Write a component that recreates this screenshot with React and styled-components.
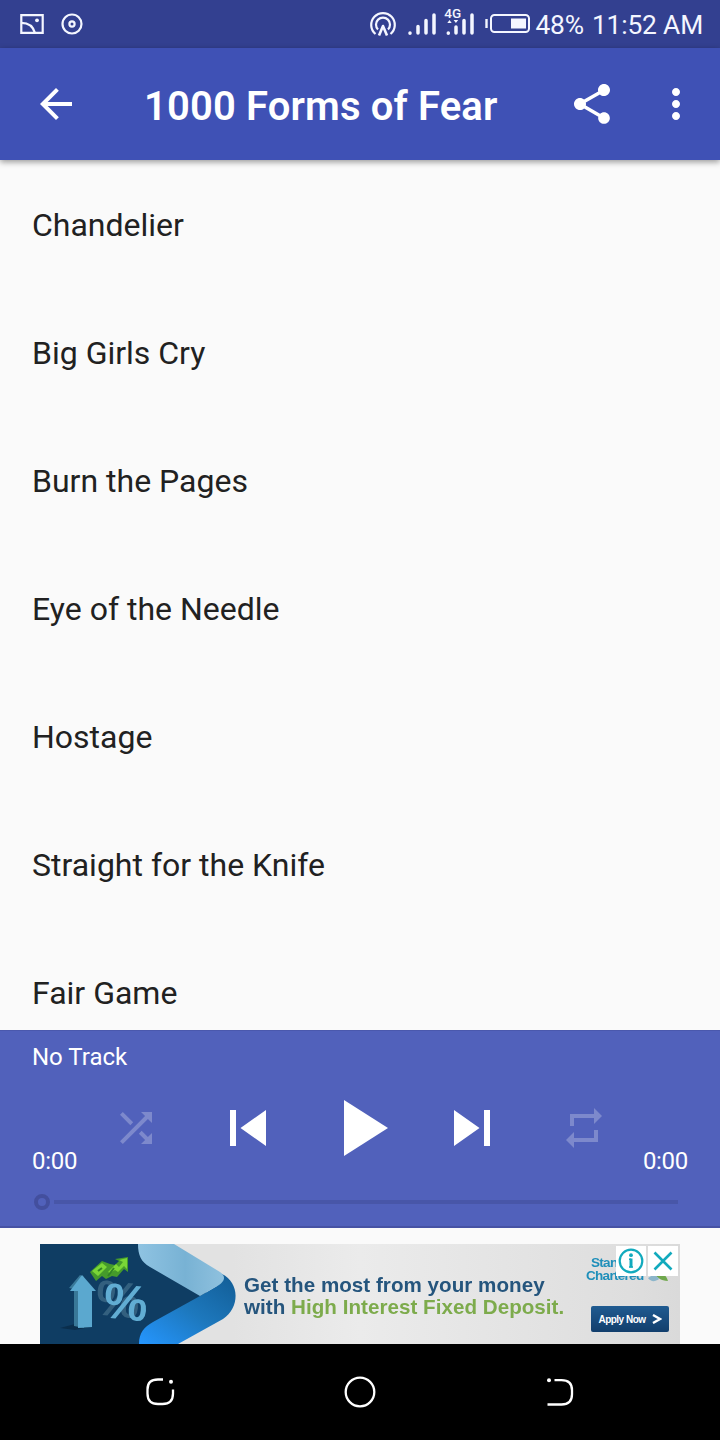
import React from "react";
import styled, { createGlobalStyle } from "styled-components";

const tracks = [
  "Chandelier",
  "Big Girls Cry",
  "Burn the Pages",
  "Eye of the Needle",
  "Hostage",
  "Straight for the Knife",
  "Fair Game",
];

const paths = {
  back: "M20 11H7.83l5.59-5.59L12 4l-8 8 8 8 1.41-1.41L7.83 13H20v-2z",
  share:
    "M18 16.08c-.76 0-1.44.3-1.96.77L8.91 12.7c.05-.23.09-.46.09-.7s-.04-.47-.09-.7l7.05-4.11c.54.5 1.25.81 2.04.81 1.66 0 3-1.34 3-3s-1.34-3-3-3-3 1.34-3 3c0 .24.04.47.09.7L8.04 9.81C7.5 9.31 6.79 9 6 9c-1.66 0-3 1.34-3 3s1.34 3 3 3c.79 0 1.5-.31 2.04-.81l7.12 4.16c-.05.21-.08.43-.08.65 0 1.61 1.31 2.92 2.92 2.92s2.92-1.31 2.92-2.92-1.31-2.92-2.92-2.92z",
  more:
    "M12 8c1.1 0 2-.9 2-2s-.9-2-2-2-2 .9-2 2 .9 2 2 2zm0 2c-1.1 0-2 .9-2 2s.9 2 2 2 2-.9 2-2-.9-2-2-2zm0 6c-1.1 0-2 .9-2 2s.9 2 2 2 2-.9 2-2-.9-2-2-2z",
  shuffle:
    "M10.59 9.17L5.41 4 4 5.41l5.17 5.17 1.42-1.41zM14.5 4l2.04 2.04L4 18.59 5.41 20 17.96 7.46 20 9.5V4h-5.5zm.33 9.41l-1.41 1.41 3.13 3.13L14.5 20H20v-5.5l-2.04 2.04-3.13-3.13z",
  previous: "M6 6h2v12H6zm3.5 6l8.5 6V6z",
  play: "M8 5v14l11-7z",
  next: "M6 18l8.5-6L6 6v12zM16 6v12h2V6h-2z",
  repeat: "M7 7h10v3l4-4-4-4v3H5v6h2V7zm10 10H7v-3l-4 4 4 4v-3h12v-6h-2v4z",
};

const Icon = ({ name, size = 48 }) => (
  <svg width={size} height={size} viewBox="0 0 24 24" fill="currentColor">
    <path d={paths[name]} />
  </svg>
);

const StatusIcons = () => (
  <StatusGroup>
    <svg width="24" height="20" viewBox="0 0 24 20" fill="none" stroke="#f4f6ff" strokeWidth="2.2">
      <path d="M1.3 1.1h21.4v17.8H1.3z" />
      <path d="M1.3 8.8c8 0 12 4 13.7 10.2" />
      <circle cx="17" cy="6.3" r="1.9" fill="#f4f6ff" stroke="none" />
    </svg>
    <svg width="22" height="22" viewBox="0 0 22 22" fill="none" stroke="#f4f6ff" strokeWidth="2.2">
      <circle cx="11" cy="11" r="9.5" />
      <circle cx="11" cy="11" r="2.6" />
    </svg>
  </StatusGroup>
);

const Connectivity = () => (
  <svg width="164" height="48" viewBox="368 0 164 48" fill="none" stroke="#f4f6ff" strokeWidth="2.2">
    <path d="M375.5 34a11.8 11.8 0 1 1 15 0" />
    <path d="M378 29.5a7 7 0 1 1 10 0" />
    <path d="M379 35.5l4-9.5 4 9.5" strokeWidth="2.6" strokeLinejoin="round" />
    <g strokeWidth="3.5" strokeLinecap="round">
      <path d="M410 33v.2M418 26.5v6.5M426 20.5v12.5M434 15v18" />
      <path d="M448.3 33v.2M456 27v6M464 20.5v12.5M472 15v18" />
    </g>
    <path d="M447.3 23l2.2-3 2.2 3zM453.6 20h4.6l-2.3 3z" fill="#f4f6ff" stroke="none" />
    <text x="444.3" y="17.8" fill="#f4f6ff" stroke="none" fontSize="13.5" fontWeight="500">4G</text>
    <path d="M486.5 19v9" strokeWidth="2.4" />
    <rect x="491" y="15" width="38" height="17" rx="3.5" strokeWidth="2" />
    <path d="M511 18.5h15v10h-15z" fill="#f4f6ff" stroke="none" />
  </svg>
);

const AdArtwork = () => (
  <svg width="200" height="100" viewBox="0 0 200 100">
    <defs>
      <linearGradient id="upper" x1="0" x2="1">
        <stop offset="0" stopColor="#8fc3e2" />
        <stop offset=".55" stopColor="#78b2d4" />
        <stop offset="1" stopColor="#8fc1de" />
      </linearGradient>
      <linearGradient id="lower" x1="0" y1="1" x2="1" y2="0">
        <stop offset="0" stopColor="#2596ff" />
        <stop offset=".5" stopColor="#1d78bd" />
        <stop offset="1" stopColor="#125c94" />
      </linearGradient>
    </defs>
    <path d="M0 0h110l60 52-60 48H0z" fill="#0f3d63" />
    <path d="M182 30c18 9 18 34 1 45l-45 25H99c0-11 5-17 14-22l47-26 17-10z" fill="url(#lower)" />
    <path d="M98 0h36l46 28c6 4 5 9-1 13l-19 11-50-29C101 18 98 11 98 0z" fill="url(#upper)" />
    <path d="M20 84l15-4 15 3-15 3z" fill="#0a2e4c" />
    <path d="M29 44L40 31l4 2v51l-10-2V45z" fill="#397898" />
    <path d="M42 31l14 16h-4v36l-14 1V47h-8z" fill="#5ba8cf" />
    <g fontFamily="Liberation Sans" fontSize="50" fontWeight="700">
      <text x="54" y="70" fill="#33607f" transform="rotate(6 54 70)">%</text>
      <text x="62" y="73" fill="#61add3" transform="rotate(6 62 73)">%</text>
    </g>
    <path d="M50 28l12-11 8 3 5 1 4-4-4-2 13-2v15l-4-3-7 8-5-1-6 3-4-3-6 5z" fill="#459b2b" />
    <path d="M52 27l10-8 5 4-9 9zM68 28l8-8 3 3 4-5-4-2 8-2v11l-3-3-6 6-3-2-5 3z" fill="#7ad637" />
    <path d="M58 27l4-3M68 32l6-8" stroke="#328525" strokeWidth="2" />
  </svg>
);

const App = () => {
  return (
    <Screen>
      <GlobalStyle />
      <StatusBar>
        <StatusIcons />
        <StatusGroup>
          <Connectivity />
          <StatusText>48%</StatusText>
          <StatusText>11:52 AM</StatusText>
        </StatusGroup>
      </StatusBar>
      <AppBar>
        <IconButton aria-label="Back"><Icon name="back" /></IconButton>
        <Title>1000 Forms of Fear</Title>
        <IconButton aria-label="Share"><Icon name="share" /></IconButton>
        <IconButton aria-label="More"><Icon name="more" /></IconButton>
      </AppBar>
      <TrackList>
        {tracks.map((track) => (
          <Track key={track}>{track}</Track>
        ))}
      </TrackList>
      <Player>
        <NowPlaying>No Track</NowPlaying>
        <Controls>
          <IconButton dim><Icon name="shuffle" /></IconButton>
          <IconButton><Icon name="previous" size={72} /></IconButton>
          <IconButton><Icon name="play" size={96} /></IconButton>
          <IconButton><Icon name="next" size={72} /></IconButton>
          <IconButton dim><Icon name="repeat" /></IconButton>
        </Controls>
        <Times>
          <span>0:00</span>
          <span>0:00</span>
        </Times>
        <SeekBar>
          <Thumb />
          <Rail />
        </SeekBar>
      </Player>
      <AdSlot>
        <Ad>
          <AdContent>
            <AdArtwork />
            <AdCopy>
              <AdLine>Get the most from your money</AdLine>
              <AdLine>with <em>High Interest Fixed Deposit.</em></AdLine>
            </AdCopy>
            <AdBrand>
              <BrandName>
                <span>Standard</span>
                <span>Chartered</span>
                <svg width="24" height="16" viewBox="0 0 24 16">
                  <path d="M6 2c9-1 15 3 17 10-7 0-12-4-17-10z" fill="#70a84d" />
                  <path d="M3 9c5-4 9-3 11 1-4 3-8 3-11-1z" fill="#8cb6cb" />
                </svg>
              </BrandName>
              <ApplyButton>
                Apply Now
                <svg width="10" height="10" viewBox="0 0 10 10" fill="none" stroke="#fff" strokeWidth="2.4">
                  <path d="M1 1l7 4-7 4" />
                </svg>
              </ApplyButton>
            </AdBrand>
          </AdContent>
          <AdChoices>
            <AdChoice>
              <svg width="26" height="26" viewBox="0 0 26 26" fill="none" stroke="#12aabd" strokeWidth="2.2">
                <circle cx="13" cy="13" r="11.3" />
                <path d="M13 10.5v9" strokeWidth="3" />
                <path d="M11 11.3h2M11 19h4" strokeWidth="1.6" />
                <circle cx="13" cy="7.2" r="1.9" fill="#12aabd" stroke="none" />
              </svg>
            </AdChoice>
            <AdChoice>
              <svg width="20" height="20" viewBox="0 0 20 20" stroke="#12aabd" strokeWidth="2.6">
                <path d="M1.5 1.5l17 17M18.5 1.5l-17 17" />
              </svg>
            </AdChoice>
          </AdChoices>
        </Ad>
      </AdSlot>
      <NavBar>
        <svg width="30" height="30" viewBox="0 0 30 30">
          <path d="M18 2.5h-5c-7 0-10.500 3-10.500 10v4c0 7 3.500 10.500 10.500 10.500h4.500c7 0 10.500-3.500 10.500-10.500v-4" />
          <circle cx="26" cy="4.8" r="2" />
        </svg>
        <svg width="32" height="32" viewBox="0 0 32 32">
          <circle cx="16" cy="16" r="14.3" fill="none" strokeWidth="2.3" stroke="#fff" />
        </svg>
        <svg width="30" height="30" viewBox="0 0 30 30">
          <path d="M9.5 3.2h7c7 0 10.5 3 10.5 10v4c0 7-3.5 10.3-10.5 10.3H2.5" />
          <circle cx="4" cy="3.3" r="2" />
        </svg>
      </NavBar>
    </Screen>
  );
};

export default App;

const GlobalStyle = createGlobalStyle`
  * {
    box-sizing: border-box;
  }

  body {
    margin: 0;
    font-family: Roboto, sans-serif;
  }

  svg {
    display: block;
    flex-shrink: 0;
  }
`;

const Screen = styled.div`
  display: flex;
  flex-direction: column;
  width: 720px;
  height: 1440px;
  overflow: hidden;
  background: #fafafa;
`;

const StatusBar = styled.div`
  display: flex;
  justify-content: space-between;
  height: 48px;
  padding: 0 17px 0 20px;
  flex-shrink: 0;
  background: #334090;
`;

const StatusGroup = styled.div`
  display: flex;
  align-items: center;
  gap: 17px;

  svg + span {
    margin-left: -14px;
  }

  span + span {
    margin-left: -9px;
  }
`;

const StatusText = styled.span`
  padding-top: 2px;
  color: #f4f6ff;
  font-size: 26.4px;
  line-height: 32px;
  letter-spacing: -0.18px;
  white-space: nowrap;
`;

const AppBar = styled.header`
  display: flex;
  align-items: center;
  gap: 36px;
  height: 112px;
  padding: 0 20px 0 32px;
  flex-shrink: 0;
  background: #3f51b5;
  color: #fff;
  box-shadow: 0 2px 6px rgba(0, 0, 0, 0.4);
  z-index: 1;
`;

const Title = styled.h1`
  flex: 1;
  margin: 0;
  padding: 6px 0 0 28px;
  font-size: 40px;
  font-weight: 560;
  line-height: 48px;
  letter-spacing: 0.14px;
  white-space: nowrap;
`;

const IconButton = styled.button.withConfig({
  shouldForwardProp: (prop) => prop !== "dim",
})`
  padding: 0;
  border: 0;
  background: none;
  color: #fff;
  opacity: ${({ dim }) => (dim ? 0.25 : 1)};
`;

const TrackList = styled.ul`
  height: 870px;
  margin: 0;
  padding: 0;
  flex-shrink: 0;
  overflow: hidden;
  list-style: none;
`;

const Track = styled.li`
  display: flex;
  align-items: center;
  height: 128px;
  padding: 2px 32px 0;
  color: #212121;
  font-size: 32px;
`;

const Player = styled.section`
  display: flex;
  flex-direction: column;
  height: 198px;
  padding-top: 12px;
  flex-shrink: 0;
  border-top: 1px solid #4a58ad;
  border-bottom: 2px solid #4652a4;
  background: #5161bb;
  color: #fff;
  font-size: 24px;
`;

const NowPlaying = styled.div`
  height: 37px;
  padding: 0 32px;
  line-height: 28px;
`;

const Controls = styled.div`
  display: grid;
  grid-template-columns: repeat(5, 112px);
  justify-content: center;
  align-items: center;
  justify-items: center;
  height: 96px;
`;

const Times = styled.div`
  display: flex;
  justify-content: space-between;
  margin-top: -29px;
  padding: 0 32px;
  line-height: 28px;
  letter-spacing: -0.3px;
`;

const SeekBar = styled.div`
  display: flex;
  align-items: center;
  gap: 4px;
  height: 16px;
  margin-top: 19px;
  padding: 0 42px 0 34px;
`;

const Thumb = styled.div`
  width: 16px;
  height: 16px;
  border: 4px solid #434f9e;
  border-radius: 50%;
`;

const Rail = styled.div`
  flex: 1;
  height: 4px;
  background: #4856a8;
`;

const AdSlot = styled.div`
  height: 116px;
  padding: 16px 40px 0;
  flex-shrink: 0;
`;

const Ad = styled.div`
  position: relative;
  height: 100px;
  overflow: hidden;
  background: linear-gradient(90deg, #e2e2e2 30%, #ebebeb 50%, #dedede 92%, #dadada);
`;

const AdContent = styled.div`
  display: flex;
  height: 100px;
  filter: blur(0.7px);
`;

const AdCopy = styled.div`
  width: 325px;
  margin-left: 4px;
  padding-top: 30px;
  color: #25557d;
`;

const AdLine = styled.div`
  font: bold 20.6px/22px "Liberation Sans", Arial, sans-serif;
  letter-spacing: 0.03px;
  white-space: nowrap;

  em {
    color: #7dab4c;
    font-style: normal;
  }
`;

const AdBrand = styled.div`
  display: flex;
  flex-direction: column;
  align-items: flex-end;
  justify-content: space-between;
  flex: 1;
  padding: 12px 11px 12px 0;
`;

const BrandName = styled.div`
  display: grid;
  grid-template-columns: 59px 24px;
  color: #1f8fba;
  font: bold 13.5px/13px "Liberation Sans", Arial, sans-serif;
  letter-spacing: -0.7px;

  span:first-child {
    grid-column: 1 / 3;
    padding-left: 5px;
  }
`;

const ApplyButton = styled.div`
  display: flex;
  align-items: center;
  justify-content: center;
  gap: 6px;
  width: 78px;
  height: 26px;
  border-radius: 2px;
  background: linear-gradient(#205b91, #123e6c);
  color: #fff;
  font: bold 10px "Liberation Sans", Arial, sans-serif;
  letter-spacing: -0.5px;
  white-space: nowrap;
`;

const AdChoices = styled.div`
  position: absolute;
  top: 2px;
  right: 2px;
  display: flex;
  gap: 2px;
`;

const AdChoice = styled.div`
  display: flex;
  align-items: center;
  justify-content: center;
  width: 30px;
  height: 30px;
  background: #fff;
`;

const NavBar = styled.nav`
  display: flex;
  align-items: center;
  justify-content: space-between;
  height: 96px;
  padding: 0 145px;
  flex-shrink: 0;
  background: #000;

  path {
    fill: none;
    stroke: #fff;
    stroke-width: 2.3;
  }

  circle {
    fill: #fff;
  }

  circle[fill="none"] {
    fill: none;
  }
`;
